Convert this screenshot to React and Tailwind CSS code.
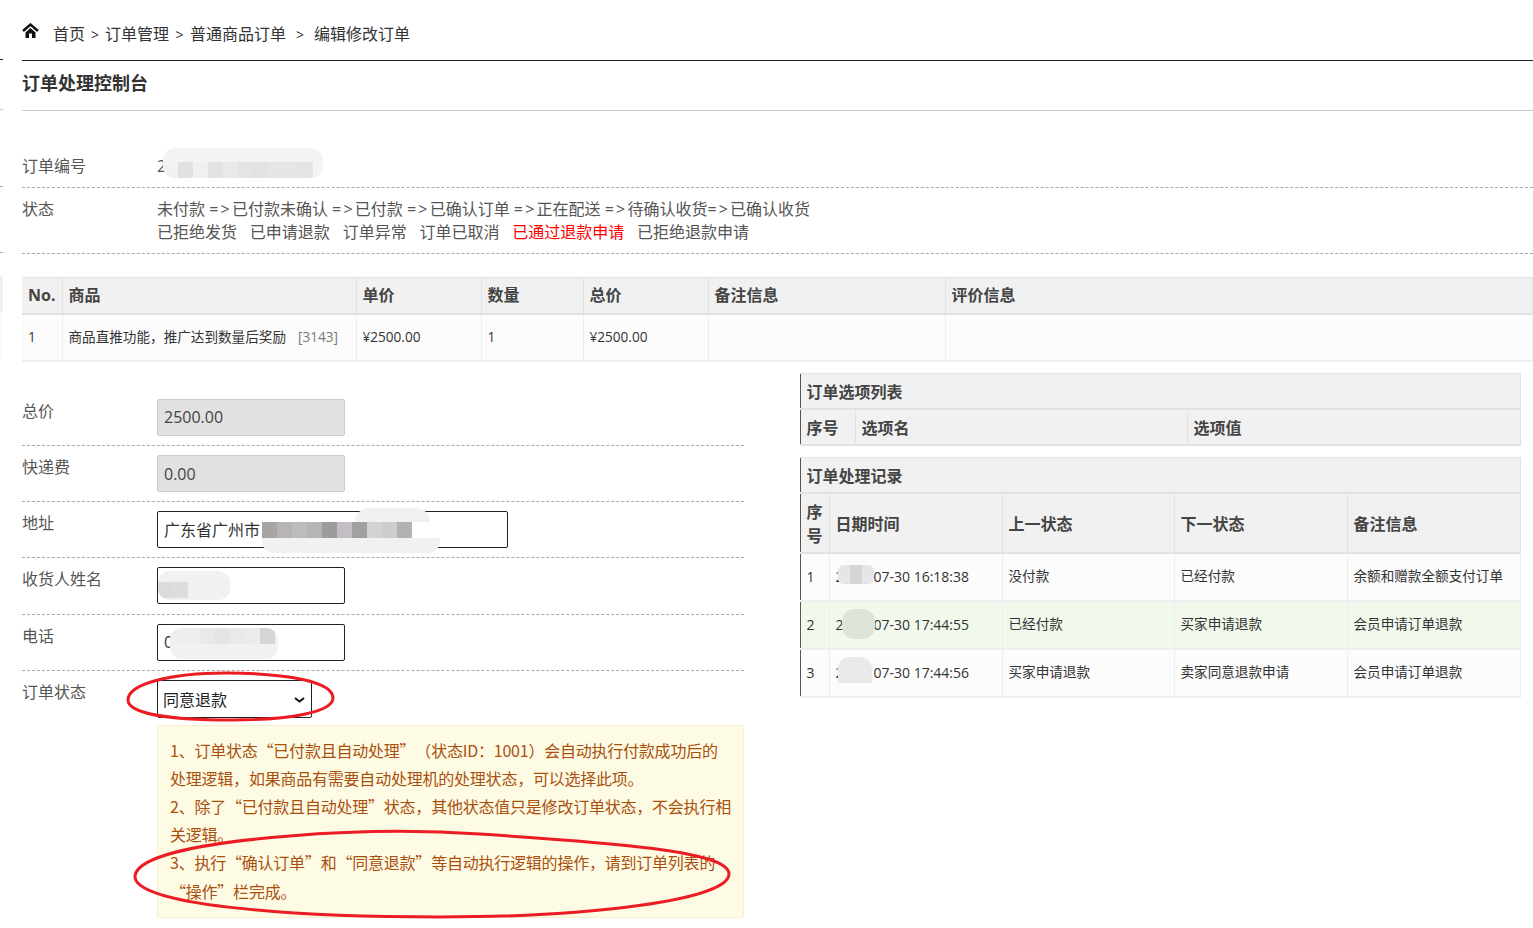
import React from 'react'

const font = { fontFamily: '"Open Sans", "Noto Sans CJK SC", sans-serif' }

// pixelated privacy smudge laid over the real value
function Smudge({ className, cells = [], cellClass = 'h-4 w-[15px]' }) {
    return (
        <div className={`absolute flex overflow-hidden pointer-events-none ${className}`}>
            {cells.map((c, i) => (
                <span key={i} className={cellClass} style={{ background: c }} />
            ))}
        </div>
    )
}

function FormRow({ label, children, last, extra }) {
    return (
        <div className={`flex pt-[9px] ${last ? '' : 'border-b border-dashed border-[#aaa]'} ${last ? '' : extra ? 'pb-[10px]' : 'pb-[9px]'}`}>
            <div className="w-[135px] pt-px text-[16px] leading-[22px] text-[#555]">{label}</div>
            <div className="relative">{children}</div>
        </div>
    )
}

function Arrow() {
    return <span className="tracking-[2.2px]">=&gt;</span>
}

const records = [
    { no: 1, time: '07-30 16:18:38', prev: '没付款', next: '已经付款', note: '余额和赠款全额支付订单', bg: 'bg-[#fcfcfc]' },
    { no: 2, time: '07-30 17:44:55', prev: '已经付款', next: '买家申请退款', note: '会员申请订单退款', bg: 'bg-[#f1f9ec]' },
    { no: 3, time: '07-30 17:44:56', prev: '买家申请退款', next: '卖家同意退款申请', note: '会员申请订单退款', bg: 'bg-[#fcfcfc]' },
]

function App() {
    const th = 'border-r border-b-2 border-[#e2e2e2] px-[6px] text-left font-bold text-[16px] text-[#444]'
    const td = 'border-r border-b-2 border-[#eeeeee] px-[6px] text-[13.6px] text-[#333]'
    const thr = 'border-r border-b-2 border-[#e2e2e2] pl-[5.5px] pr-[3px] pt-[2px] text-left font-bold text-[16px] text-[#444]'
    const tdr = 'border-r border-b-2 border-[#eeeeee] pl-[5.5px] pr-[3px] text-[13.6px] text-[#333]'

    return (
        <div style={font} className="relative h-[928px] overflow-hidden bg-white pl-[22px]">
            {/* 左边缘露出的残边 */}
            <div className="absolute left-0 top-[59px] h-px w-[3px] bg-[#222]" />
            <div className="absolute left-0 top-[109px] h-px w-[3px] bg-[#ccc]" />
            <div className="absolute left-0 top-[186px] h-px w-[3px] bg-[#aaa]" />
            <div className="absolute left-0 top-[252px] h-px w-[3px] bg-[#aaa]" />
            <div className="absolute left-0 top-[276px] h-[36px] w-[3px] bg-[#f1f1f1]" />
            <div className="absolute left-0 top-[312px] h-[48px] w-[3px] bg-[#fafafa]" />

            {/* 面包屑 */}
            <div className="flex h-[61px] items-center border-b border-[#222] pt-[8px] text-[16px] text-[#333]">
                <svg width="17" height="15" viewBox="0 0 17 15" className="mb-[7px] mr-[14px]" fill="#111">
                    <polyline points="1,8 8.5,1.5 16,8" fill="none" stroke="#111" strokeWidth="2.4" />
                    <path d="M3.5 9.5 L8.5 5 L13.5 9.5 V15 H10 V10.5 H7 V15 H3.5 Z" />
                </svg>
                <span>首页</span>
                <span className="mx-[6px] text-[14px]">&gt;</span>
                <span>订单管理</span>
                <span className="mx-[6.5px] text-[14px]">&gt;</span>
                <span>普通商品订单</span>
                <span className="mx-[10px] text-[14px]">&gt;</span>
                <span>编辑修改订单</span>
            </div>

            <div className="flex h-[50px] items-start border-b border-[#ccc] pt-[9px] text-[18px] font-bold leading-[26px] text-[#333]">
                订单处理控制台
            </div>

            <div className="flex h-[77px] items-end border-b border-dashed border-[#aaa] pb-[9px] text-[16px] text-[#555]">
                <div className="w-[135px]">订单编号</div>
                <div className="relative">
                    2
                    <Smudge
                        className="left-[6px] top-[-6px] h-[30px] w-[160px] items-end rounded-xl bg-[#f3f3f3]"
                        cells={['#f1f1f1', '#e1e1e1', '#f0f0f0', '#e2e4e4', '#e9e9e9', '#e4e4e4', '#e2e2e2', '#e6e6e6', '#e6e6e6', '#e4e4e4']}
                    />
                </div>
            </div>

            <div className="flex h-[66px] border-b border-dashed border-[#aaa] pt-[10px] text-[16px] leading-[23px] text-[#555]">
                <div className="w-[135px]">状态</div>
                <div>
                    <div>
                        未付款 <Arrow />已付款未确认 <Arrow />已付款 <Arrow />已确认订单 <Arrow />正在配送 <Arrow />待确认收货<Arrow />已确认收货
                    </div>
                    <div className="flex gap-[12.8px]">
                        <span>已拒绝发货</span>
                        <span>已申请退款</span>
                        <span>订单异常</span>
                        <span>订单已取消</span>
                        <span className="text-[#f00]">已通过退款申请</span>
                        <span>已拒绝退款申请</span>
                    </div>
                </div>
            </div>

            {/* 商品表 */}
            <table className="mt-[23px] w-full table-fixed border-collapse border-t border-[#e2e2e2]">
                <colgroup>
                    <col className="w-[40px]" />
                    <col className="w-[294px]" />
                    <col className="w-[125px]" />
                    <col className="w-[102px]" />
                    <col className="w-[125px]" />
                    <col className="w-[237px]" />
                    <col />
                </colgroup>
                <thead>
                    <tr className="h-[36px] bg-[#f1f1f1]">
                        {['No.', '商品', '单价', '数量', '总价', '备注信息', '评价信息'].map((h) => (
                            <th key={h} className={th}>{h}</th>
                        ))}
                    </tr>
                </thead>
                <tbody>
                    <tr className="h-[47px] bg-[#fcfcfc]">
                        <td className={td}>1</td>
                        <td className={`${td} whitespace-nowrap`}>
                            商品直推功能，推广达到数量后奖励<span className="ml-3 text-[#777]">[3143]</span>
                        </td>
                        <td className={td}>¥2500.00</td>
                        <td className={td}>1</td>
                        <td className={td}>¥2500.00</td>
                        <td className={td}></td>
                        <td className={td}></td>
                    </tr>
                </tbody>
            </table>

            <div className="flex items-start gap-[56px] pt-[11px]">
                {/* 左侧表单 */}
                <div className="w-[722px] shrink-0 pt-[17px]">
                    <FormRow label="总价">
                        <input readOnly value="2500.00" className="block h-[37px] w-[188px] rounded-[2px] border border-[#ccc] bg-[#e1e1e1] px-[6px] text-[16px] text-[#444]" />
                    </FormRow>
                    <FormRow label="快递费">
                        <input readOnly value="0.00" className="block h-[37px] w-[188px] rounded-[2px] border border-[#ccc] bg-[#e1e1e1] px-[6px] pt-[2px] text-[16px] text-[#444]" />
                    </FormRow>
                    <FormRow label="地址">
                        <input readOnly value="广东省广州市" className="block h-[37px] w-[351px] rounded-[2px] border border-[#222] px-[6px] text-[16px] text-[#333]" />
                        <Smudge
                            className="left-[105px] top-[11px] h-[16px] w-[151px]"
                            cells={['#a8a4a6', '#b7b5b3', '#bcbdbb', '#b5b5b5', '#9c9c9c', '#c4bec4', '#9fa2a0', '#d2d4d2', '#cdcdcd', '#b2b2b0']}
                        />
                        <Smudge className="left-[105px] top-[27px] h-[15px] w-[178px] rounded-b-xl bg-[#f1f1f1]" />
                        <Smudge className="left-[198px] top-[-3px] h-[14px] w-[75px] rounded-t-3xl bg-[#f1f1f1]" />
                    </FormRow>
                    <FormRow label="收货人姓名" extra>
                        <input readOnly value="" className="block h-[37px] w-[188px] rounded-[2px] border border-[#222] px-[7px] text-[16px] text-[#333]" />
                        <Smudge
                            className="left-px top-[4px] h-[29px] w-[72px] items-end rounded-xl bg-[#f1f1f1] pb-[2px]"
                            cells={['#dcdada', '#dddddd']}
                        />
                    </FormRow>
                    <FormRow label="电话">
                        <input readOnly value="0" className="block h-[37px] w-[188px] rounded-[2px] border border-[#222] px-[6px] text-[16px] text-[#333]" />
                        <Smudge
                            className="left-[13px] top-[4px] h-[31px] w-[108px] items-start rounded-xl bg-[#f1f1f1]"
                            cells={['#eeeeee', '#eeeeee', '#e9e9e9', '#e4e4e4', '#e9e9e9', '#ebebeb', '#d5d5d5']}
                        />
                    </FormRow>
                    <FormRow label="订单状态" last>
                        <div className="relative w-[155px]">
                            <select className="block h-[38px] w-full appearance-none rounded-[2px] border border-[#222] bg-white pl-[5px] pt-[3px] text-[16px] text-[#222]" defaultValue="同意退款">
                                <option>同意退款</option>
                            </select>
                            <svg className="absolute left-[137px] top-[17px] pointer-events-none" width="11" height="6" viewBox="0 0 11 6" fill="none" stroke="#111" strokeWidth="2">
                                <polyline points="1,1 5.5,4.5 10,1" />
                            </svg>
                        </div>
                        <div className="mt-[7px] h-[193px] w-[587px] rounded-[2px] border border-[#f6efc9] bg-[#fefbe4] pl-[12px] pr-[11px] pt-[10px] font-['Noto_Sans_CJK_SC'] text-[16px] leading-[28.2px] tracking-[-0.22px] text-[#a9500f] [text-spacing-trim:space-all]">
                            <p>1、订单状态“已付款且自动处理”（状态ID：1001）会自动执行付款成功后的处理逻辑，如果商品有需要自动处理机的处理状态，可以选择此项。</p>
                            <p>2、除了“已付款且自动处理”状态，其他状态值只是修改订单状态，不会执行相关逻辑。</p>
                            <p>3、执行“确认订单”和“同意退款”等自动执行逻辑的操作，请到订单列表的<wbr />“操作”栏完成。</p>
                        </div>
                    </FormRow>
                </div>

                {/* 右侧记录 */}
                <div className="w-[721px] shrink-0">
                    <table className="w-full table-fixed border-collapse border-l border-t border-l-[#555] border-t-[#e2e2e2]">
                        <colgroup>
                            <col className="w-[55px]" />
                            <col className="w-[332px]" />
                            <col />
                        </colgroup>
                        <thead>
                            <tr className="h-[36px] bg-[#f1f1f1]">
                                <th colSpan={3} className={thr}>订单选项列表</th>
                            </tr>
                            <tr className="h-[36px] bg-[#f1f1f1]">
                                <th className={thr}>序号</th>
                                <th className={thr}>选项名</th>
                                <th className={thr}>选项值</th>
                            </tr>
                        </thead>
                    </table>

                    <table className="mt-[11px] w-full table-fixed border-collapse border-l border-t border-l-[#555] border-t-[#e2e2e2]">
                        <colgroup>
                            <col className="w-[29px]" />
                            <col className="w-[173px]" />
                            <col className="w-[172px]" />
                            <col className="w-[173px]" />
                            <col />
                        </colgroup>
                        <thead>
                            <tr className="h-[35px] bg-[#f1f1f1]">
                                <th colSpan={5} className={thr}>订单处理记录</th>
                            </tr>
                            <tr className="h-[60px] bg-[#f1f1f1]">
                                <th className={`${thr} leading-[24px]`}>序号</th>
                                <th className={thr}>日期时间</th>
                                <th className={thr}>上一状态</th>
                                <th className={thr}>下一状态</th>
                                <th className={thr}>备注信息</th>
                            </tr>
                        </thead>
                        <tbody>
                            {records.map((r) => (
                                <tr key={r.no} className={`h-[48px] ${r.bg}`}>
                                    <td className={`${tdr} text-[14px]`}>{r.no}</td>
                                    <td className={`${tdr} text-[14px]`}>
                                        <div className="relative pl-[38px]">
                                            <span className="absolute left-0">2</span>
                                            {r.time}
                                            {r.no === 1 && (
                                                <Smudge
                                                    className="left-[2px] top-[-1px] h-[19px] w-[36px] rounded-md bg-[#f1f1f1]"
                                                    cells={['#e6e6e6', '#d5d5d5', '#e6e6e6']}
                                                    cellClass="h-[19px] w-[12px]"
                                                />
                                            )}
                                            {r.no === 2 && (
                                                <Smudge className="left-[6px] top-[-5px] h-[30px] w-[33px] rounded-xl bg-[#dde5d8]" />
                                            )}
                                            {r.no === 3 && (
                                                <Smudge className="left-[2px] top-[-5px] h-[26px] w-[34px] rounded-t-xl bg-[#e9e9e9]" />
                                            )}
                                        </div>
                                    </td>
                                    <td className={tdr}>{r.prev}</td>
                                    <td className={tdr}>{r.next}</td>
                                    <td className={tdr}>{r.note}</td>
                                </tr>
                            ))}
                        </tbody>
                    </table>
                </div>
            </div>

            {/* 红圈标注 */}
            <svg className="absolute left-0 top-0 pointer-events-none" width="1533" height="928" fill="none" stroke="#ec1c24" strokeWidth="3">
                <path d="M128 700 C128 684 170 673 226 673 C288 673 333 682 333 698 C333 712 290 720 232 720 C172 720 128 714 128 700 Z" />
                <path d="M135 876 C137 858 190 844 290 836 C350 831 420 830 480 834 C600 842 729 850 729 874 C729 900 590 917 440 917 C290 917 133 905 135 876 Z" />
            </svg>
        </div>
    )
}

export default App
